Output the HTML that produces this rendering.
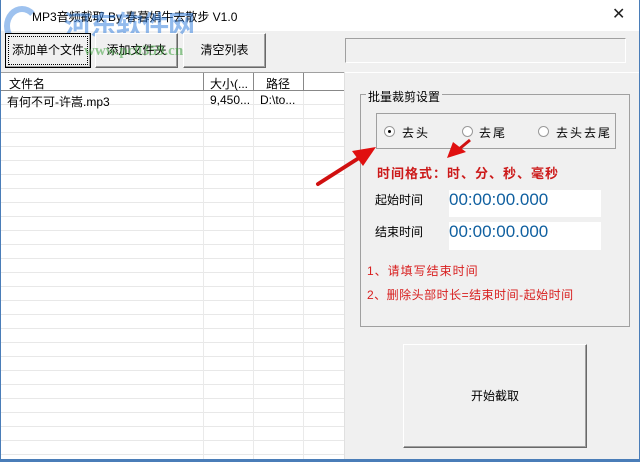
<!DOCTYPE html>
<html><head><meta charset="utf-8"><style>
*{margin:0;padding:0;box-sizing:border-box}
body{width:640px;height:462px;overflow:hidden;background:#f0f0f0;font-family:"Liberation Sans","Noto Sans CJK SC",sans-serif;font-size:12px;color:#000;position:relative}
.a{position:absolute}
.btn{position:absolute;background:#f0f0f0;border:1px solid;border-color:#fff #696969 #696969 #fff;box-shadow:inset -1px -1px 0 #a0a0a0;text-align:center;font-size:12px}
.red{color:#d81e1e}
</style></head><body>
<div class="a" style="left:0;top:0;width:640px;height:31px;background:#fff"></div>
<div class="a" style="left:4px;top:6px;width:36px;height:40px;border-radius:50%;border:6px solid rgba(40,120,220,0.45);border-right-color:transparent"></div>
<div class="a" style="left:32px;top:8px;font-size:12px">MP3音频截取 By 春暮娟牛去散步 V1.0</div>
<div class="a" style="left:612px;top:4px;font-size:16px;color:#222">✕</div>
<div class="a" style="left:64px;top:10px;font-size:27px;line-height:1;font-weight:bold;color:rgba(40,120,220,0.5);font-family:'Noto Sans CJK SC',sans-serif;letter-spacing:-1px">河东软件网</div>

<div class="btn" style="left:5px;top:33px;width:86px;height:35px;line-height:33px;border-color:#000;outline:1px dotted #000;outline-offset:-4px">添加单个文件</div>
<div class="btn" style="left:95px;top:33px;width:83px;height:35px;line-height:33px">添加文件夹</div>
<div class="btn" style="left:183px;top:33px;width:83px;height:35px;line-height:33px">清空列表</div>
<div class="a" style="left:84px;top:44px;font-size:15px;line-height:1;font-weight:bold;color:rgba(60,160,60,0.55);font-family:'Liberation Serif',serif">www.pc0359.cn</div>
<div class="a" style="left:345px;top:38px;width:281px;height:25px;border:1px solid;border-color:#a0a0a0 #fff #fff #a0a0a0"></div>

<div class="a" style="left:0;top:72px;width:345px;height:390px;background:#fff;border-top:1px solid #a0a0a0;border-left:1px solid #a0a0a0;overflow:hidden">
<div class="a" style="left:0;top:0;width:345px;height:18px;border-bottom:1px solid #888;background:#fff"></div>
<div class="a" style="left:8px;top:2px">文件名</div>
<div class="a" style="left:209px;top:2px">大小(...</div>
<div class="a" style="left:265px;top:2px">路径</div>
<div class="a" style="left:202px;top:0;width:1px;height:18px;background:#888"></div>
<div class="a" style="left:252px;top:0;width:1px;height:18px;background:#888"></div>
<div class="a" style="left:302px;top:0;width:1px;height:18px;background:#888"></div>
<div class="a" style="left:0;top:18px;width:345px;height:380px;background:repeating-linear-gradient(to bottom,transparent 0,transparent 13px,#e8e8e8 13px,#e8e8e8 14px)"></div>
<div class="a" style="left:202px;top:18px;width:1px;height:380px;background:#eaeaea"></div>
<div class="a" style="left:252px;top:18px;width:1px;height:380px;background:#eaeaea"></div>
<div class="a" style="left:302px;top:18px;width:1px;height:380px;background:#eaeaea"></div>
<div class="a" style="left:6px;top:20px">有何不可-许嵩.mp3</div>
<div class="a" style="left:209px;top:20px">9,450...</div>
<div class="a" style="left:259px;top:20px">D:\to...</div>
</div>
<div class="a" style="left:344px;top:72px;width:1px;height:390px;background:#e0e0e0"></div>
<div class="a" style="left:345px;top:72px;width:295px;height:1px;background:#fff"></div>

<div class="a" style="left:360px;top:94px;width:270px;height:233px;border:1px solid #a0a0a0"></div>
<div class="a" style="left:366px;top:88px;background:#f0f0f0;padding:0 2px">批量裁剪设置</div>
<div class="a" style="left:376px;top:113px;width:240px;height:36px;border:1px solid #a0a0a0"></div>
<div class="a" style="left:384px;top:126px;width:11px;height:11px;border-radius:50%;background:#fff;border:1px solid #999"><div class="a" style="left:3px;top:3px;width:3px;height:3px;border-radius:50%;background:#000"></div></div>
<div class="a" style="left:402px;top:124px;letter-spacing:2px">去头</div>
<div class="a" style="left:462px;top:126px;width:11px;height:11px;border-radius:50%;background:#fff;border:1px solid #999"></div>
<div class="a" style="left:479px;top:124px;letter-spacing:2px">去尾</div>
<div class="a" style="left:538px;top:126px;width:11px;height:11px;border-radius:50%;background:#fff;border:1px solid #999"></div>
<div class="a" style="left:556px;top:124px;letter-spacing:2px">去头去尾</div>
<div class="a red" style="left:377px;top:163px;font-weight:bold;font-size:13px;letter-spacing:1px;color:#cc1a1a">时间格式：时、分、秒、毫秒</div>
<div class="a" style="left:375px;top:191px">起始时间</div>
<div class="a" style="left:449px;top:190px;width:152px;height:27px;background:#fff;color:#1060a0;font-size:17px;line-height:20px">00:00:00.000</div>
<div class="a" style="left:375px;top:223px">结束时间</div>
<div class="a" style="left:449px;top:222px;width:152px;height:28px;background:#fff;color:#1060a0;font-size:17px;line-height:20px">00:00:00.000</div>
<div class="a red" style="left:367px;top:262px;letter-spacing:1px">1、请填写结束时间</div>
<div class="a red" style="left:367px;top:286px;letter-spacing:.5px">2、删除头部时长=结束时间-起始时间</div>

<div class="btn" style="left:403px;top:344px;width:184px;height:104px;line-height:102px">开始截取</div>

<svg class="a" style="left:0;top:0" width="640" height="462">
<line x1="318" y1="184" x2="362" y2="156" stroke="#d01010" stroke-width="4" stroke-linecap="round"/>
<polygon points="376,147 352,151 363,166" fill="#e01010"/>
<line x1="470" y1="140" x2="458" y2="150" stroke="#d01010" stroke-width="3"/>
<polygon points="447,158 453,142 466,152" fill="#e01010"/>
</svg>
<div class="a" style="left:0;top:459px;width:640px;height:3px;background:#4a7db8"></div>
<div class="a" style="left:0;top:0;width:1px;height:462px;background:#4a7db8"></div>
<div class="a" style="left:639px;top:0;width:1px;height:462px;background:#4a7db8"></div>
</body></html>
